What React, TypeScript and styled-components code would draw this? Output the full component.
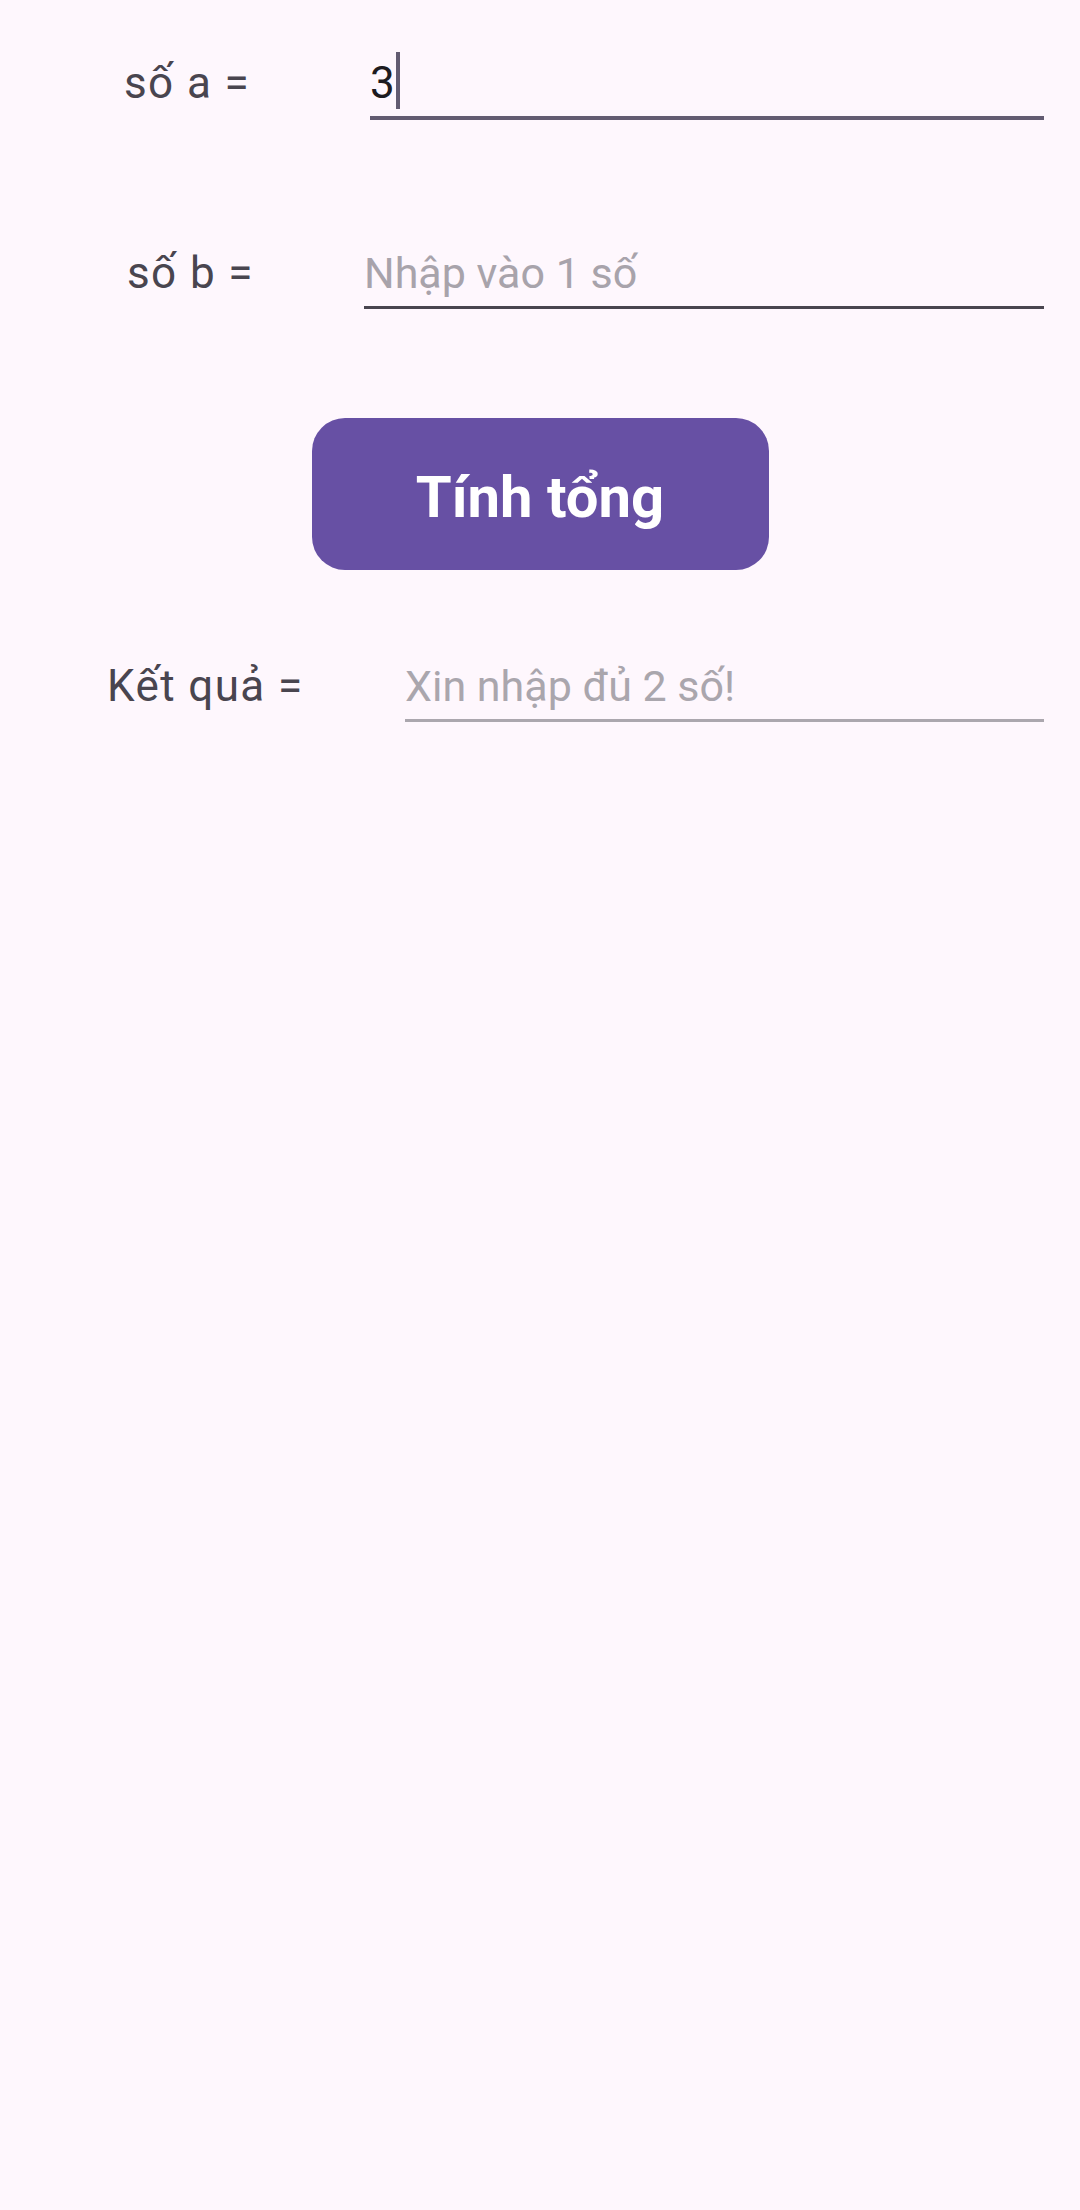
import React, { useState } from "react";
import styled, { createGlobalStyle } from "styled-components";

const GlobalStyle = createGlobalStyle`
  html, body {
    margin: 0;
    padding: 0;
    background: #fef7fd;
    font-family: Roboto, "Noto Sans", "Liberation Sans", sans-serif;
  }
  * {
    box-sizing: border-box;
  }
`;

const Screen = styled.div`
  min-height: 2210px;
  width: 1080px;
  background: #fef7fd;
  display: flex;
  flex-direction: column;
  padding: 57px 36px 0 0;
`;

const Row = styled.div<{ $top: number; $labelCol: number; $indent: number }>`
  display: grid;
  grid-template-columns: ${(p) => p.$labelCol}px 1fr;
  align-items: start;
  margin-top: ${(p) => p.$top}px;
  padding-left: ${(p) => p.$indent}px;
`;

const Label = styled.div`
  font-size: 44px;
  line-height: 52px;
  letter-spacing: 1.4px;
  color: #49454f;
  white-space: nowrap;
`;

const FieldBox = styled.div<{ $line: string; $thick: number }>`
  display: flex;
  align-items: flex-start;
  height: ${(p) => 59 + p.$thick}px;
  padding-bottom: 7px;
  border-bottom: ${(p) => p.$thick}px solid ${(p) => p.$line};
`;

const ValueText = styled.span`
  font-size: 44px;
  line-height: 52px;
  color: #1d1b20;
`;

const Caret = styled.span`
  display: inline-block;
  width: 4px;
  height: 57px;
  margin-top: -5px;
  margin-left: 1px;
  background: #625b71;
`;

const TextInput = styled.input<{ $hint: string }>`
  width: 100%;
  border: none;
  outline: none;
  background: transparent;
  padding: 0;
  font-family: inherit;
  font-size: 43px;
  line-height: 52px;
  height: 52px;
  color: #1d1b20;

  &::placeholder {
    color: ${(p) => p.$hint};
  }
`;

const ButtonRow = styled.div`
  display: flex;
  justify-content: center;
  margin-top: 109px;
  padding-left: 36px;
`;

const SumButton = styled.button`
  width: 457px;
  height: 152px;
  border: none;
  border-radius: 33px;
  background: #6750a4;
  color: #ffffff;
  font-family: inherit;
  font-size: 58px;
  font-weight: 700;
  display: flex;
  align-items: center;
  justify-content: center;
  padding: 6px 0 0;
  cursor: pointer;
`;

export default function App() {
  const [a] = useState("3");
  const [b, setB] = useState("");
  const [result, setResult] = useState("");

  const handleSum = () => {
    const x = Number(a);
    const y = Number(b);
    if (a === "" || b === "" || isNaN(x) || isNaN(y)) {
      setResult("");
      return;
    }
    setResult(String(x + y));
  };

  return (
    <>
      <GlobalStyle />
      <Screen>
        <Row $top={0} $labelCol={246} $indent={124}>
          <Label>số a =</Label>
          <FieldBox $line="#625b71" $thick={4}>
            <ValueText>{a}</ValueText>
            <Caret />
          </FieldBox>
        </Row>

        <Row $top={127} $labelCol={237} $indent={127}>
          <Label>số b =</Label>
          <FieldBox $line="#49454f" $thick={3}>
            <TextInput
              $hint="#a8a3ab"
              placeholder="Nhập vào 1 số"
              value={b}
              onChange={(e) => setB(e.target.value)}
            />
          </FieldBox>
        </Row>

        <ButtonRow>
          <SumButton onClick={handleSum}>Tính tổng</SumButton>
        </ButtonRow>

        <Row $top={90} $labelCol={298} $indent={107}>
          <Label>Kết quả =</Label>
          <FieldBox $line="#aba7ae" $thick={3}>
            <TextInput
              $hint="#aaa6ad"
              placeholder="Xin nhập đủ 2 số!"
              value={result}
              readOnly
            />
          </FieldBox>
        </Row>
      </Screen>
    </>
  );
}
